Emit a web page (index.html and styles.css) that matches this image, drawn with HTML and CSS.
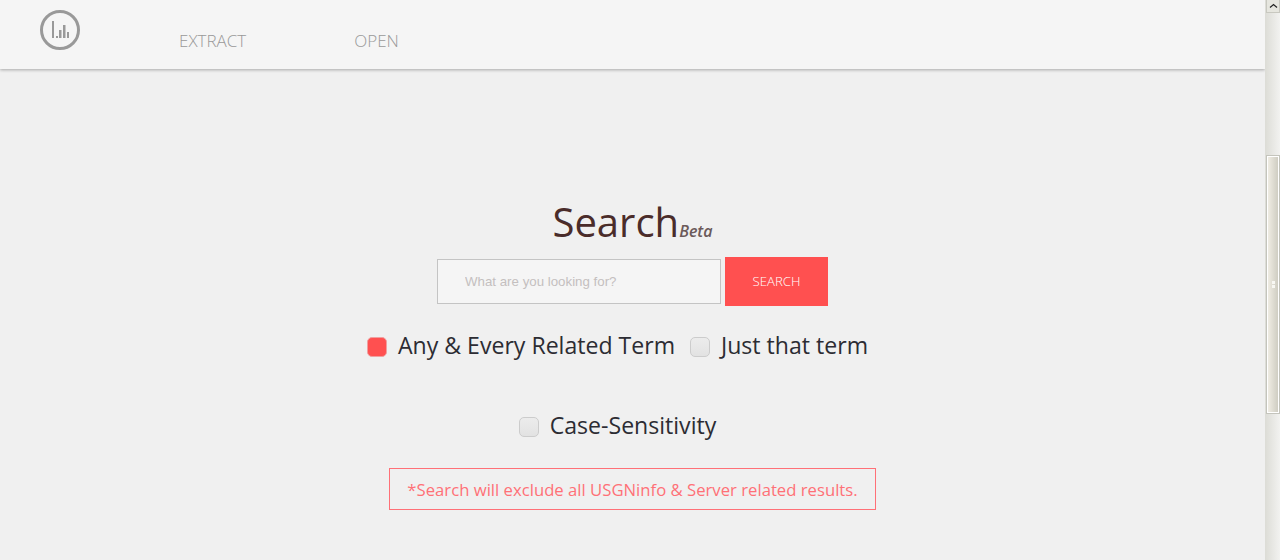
FILE: index.html
```html
<!DOCTYPE html>
<html lang="en">
<head>
  <meta charset="UTF-8">
  <title>Search</title>
  <link rel="stylesheet" href="styles.css">
</head>
<body>
  <div class="page">
    <div class="content">
      <header class="topbar">
        <a class="logo" href="#">
          <svg width="42" height="42" viewBox="0 0 42 42">
            <circle cx="21" cy="20" r="18.5" fill="none" stroke="#999" stroke-width="3"/>
            <rect x="13" y="11" width="2" height="17" fill="#999"/>
            <rect x="17" y="26" width="2" height="2" fill="#999"/>
            <rect x="20" y="20" width="2.5" height="8" fill="#999"/>
            <rect x="24" y="15" width="2.5" height="13" fill="#999"/>
            <rect x="28" y="22" width="2" height="6" fill="#999"/>
          </svg>
        </a>
        <nav class="nav">
          <a href="#">EXTRACT</a>
          <a href="#">OPEN</a>
        </nav>
      </header>

      <main class="search">
        <h1 class="title">Search<em>Beta</em></h1>
        <form class="search-form">
          <input class="search-input" type="text" placeholder="What are you looking for?">
          <button class="search-btn" type="button">SEARCH</button>
        </form>
        <div class="options">
          <label class="option"><span class="box checked"></span>Any &amp; Every Related Term</label>
          <label class="option"><span class="box"></span>Just that term</label>
        </div>
        <div class="options case">
          <label class="option"><span class="box"></span>Case-Sensitivity</label>
        </div>
        <p class="notice">*Search will exclude all USGNinfo &amp; Server related results.</p>
      </main>
    </div>

    <div class="scrollbar">
      <div class="arrow">
        <svg width="9" height="6" viewBox="0 0 9 6"><path d="M1 4.5 L4.5 1.5 L8 4.5" fill="none" stroke="#222" stroke-width="1.2"/></svg>
      </div>
      <div class="thumb"><span class="grip"></span></div>
    </div>
  </div>
</body>
</html>
```

FILE: styles.css
```css
* { box-sizing: border-box; }
html, body { height: 100%; }
body { margin: 0; background: #f0f0f0; font-family: "Open Sans", sans-serif; overflow: hidden; }

.page { display: flex; height: 560px; }
.content { flex: 1; min-width: 0; }

.topbar { display: flex; height: 69px; padding-left: 39px; background: #f5f5f5; box-shadow: 0 1px 3px rgba(0,0,0,0.3); }
.logo { display: block; width: 42px; height: 42px; margin-top: 10px; }
.nav { display: flex; gap: 108px; margin-left: 98px; padding-top: 30px; }
.nav a { color: #999; font-size: 17px; font-weight: 300; line-height: 22px; text-decoration: none; }

.search { display: flex; flex-direction: column; align-items: center; padding-top: 126px; }
.title { margin: 0; color: #4a2c2a; font-size: 40px; font-weight: 400; line-height: 54px; }
.title em { color: #6b5a5a; font-size: 16px; font-weight: 600; line-height: 0; }

.search-form { display: flex; align-items: center; gap: 4px; margin-top: 8px; }
.search-input { width: 284px; height: 45px; padding: 0 27px; background: #f5f5f5; border: 1px solid #c4c4c4; border-radius: 0; font-family: "Liberation Sans", sans-serif; font-size: 13.3px; outline: none; }
.search-input::placeholder { color: #c4bfbf; opacity: 1; }
.search-btn { width: 103px; height: 49px; padding: 0 0 2px; background: #ff5050; border: none; color: #fff; font-family: "Open Sans", sans-serif; font-size: 13.2px; font-weight: 300; cursor: pointer; }

.options { display: flex; gap: 15px; margin-top: 21px; padding-right: 30px; }
.options.case { margin-top: 44px; }
.option { display: flex; align-items: center; gap: 11px; color: #2c2c33; font-size: 23.08px; line-height: 36px; }
.box { width: 20px; height: 20px; margin-top: 4px; background: linear-gradient(#ececec, #e2e2e2); border: 1px solid #ccc; border-radius: 5px; }
.box.checked { background: #ff5050; border-color: #f0a0a0; }

.notice { margin: 25px 0 0; padding: 0 17px; height: 42px; border: 1px solid #ff7077; color: #ff7077; font-size: 16.7px; line-height: 41px; white-space: nowrap; }

.scrollbar { flex: none; width: 15px; padding-left: 1px; background: linear-gradient(to right, #dcdcd6, #f2f2f0); }
.arrow { display: flex; align-items: center; justify-content: center; height: 13px; border: 1px solid #c8c8c0; border-top: none; background: #e6e6df; }
.thumb { display: flex; align-items: center; justify-content: center; height: 259px; margin-top: 142px; border: 2px solid #fff; outline: 1px solid #c4c4bc; outline-offset: -1px; background: linear-gradient(to right, #efece3, #cfcdc2); }
.grip { width: 3px; height: 8px; background: repeating-linear-gradient(to bottom, #f8f8f4 0 3px, transparent 3px 4px); }
```
